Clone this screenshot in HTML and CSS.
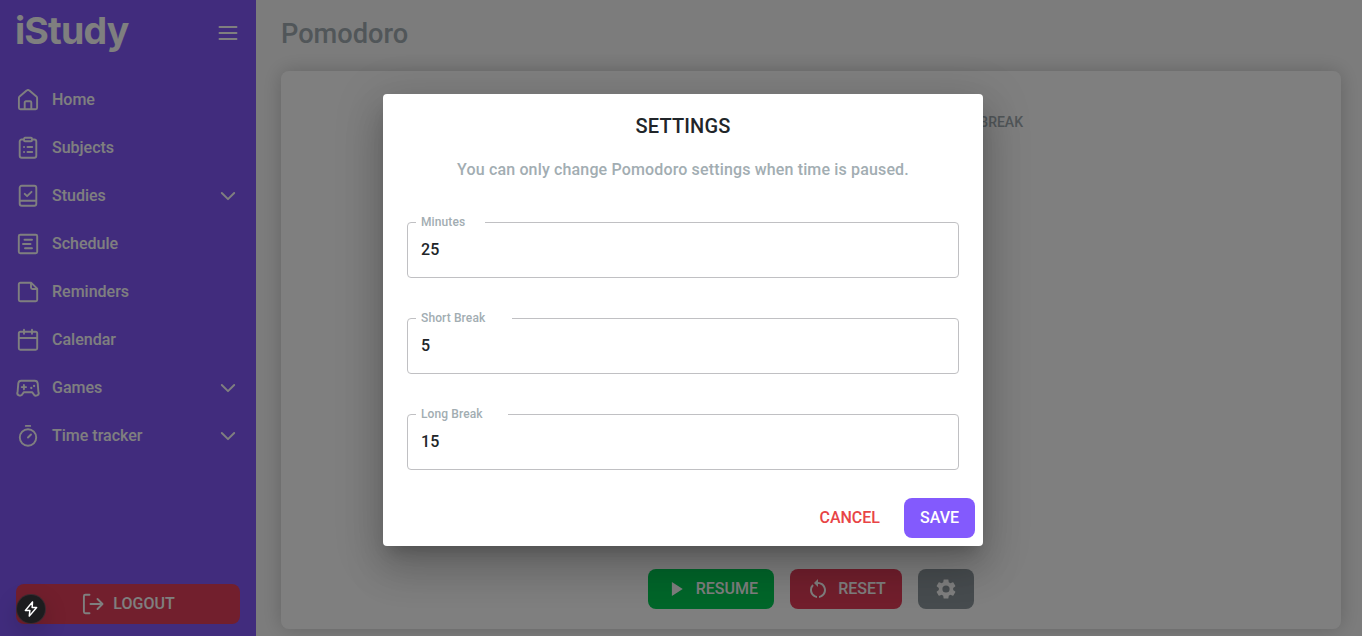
FILE: index.html
```html
<!DOCTYPE html>
<html lang="en">
<head>
<meta charset="utf-8">
<title>iStudy - Pomodoro</title>
<link rel="stylesheet" href="styles.css">
</head>
<body>
<div class="app">
  <aside class="sidebar">
    <div class="brand">
      <span class="logo">iStudy</span>
      <svg class="icon" viewBox="0 0 24 24"><path d="M3.500 6h17M3.500 12h17M3.500 18h17"/></svg>
    </div>
    <nav class="nav">
      <a class="item"><svg class="icon" viewBox="0 0 24 24"><path d="M2.900 10a2 2 0 0 1 .7-1.500l7-5.900a2.100 2.100 0 0 1 2.800 0l7 5.900a2 2 0 0 1 .7 1.500v9.700a1.500 1.500 0 0 1-1.500 1.500H4.400a1.500 1.500 0 0 1-1.500-1.500zM8.700 21v-6.500a1.200 1.200 0 0 1 1.200-1.200h4.200a1.200 1.200 0 0 1 1.200 1.200V21"/></svg><span>Home</span></a>
      <a class="item"><svg class="icon" viewBox="0 0 24 24"><path d="M8 3.500H5.700a2 2 0 0 0-2 2v14.300a2 2 0 0 0 2 2h12.600a2 2 0 0 0 2-2V5.500a2 2 0 0 0-2-2H16M9 1.800h6a1 1 0 0 1 1 1v1.400a1 1 0 0 1-1 1H9a1 1 0 0 1-1-1V2.800a1 1 0 0 1 1-1zM8 11h.1M11.500 11h4.700M8 16h.1M11.500 16h4.700"/></svg><span>Subjects</span></a>
      <a class="item"><svg class="icon" viewBox="0 0 24 24"><path d="M5.700 1.800h12.600a2 2 0 0 1 2 2v16a2 2 0 0 1-2 2H5.700a2 2 0 0 1-2-2v-16a2 2 0 0 1 2-2zM4 16.700h16M8.700 9.800l2.400 2.400 4.400-4.400"/></svg><span>Studies</span><svg class="icon chevron" viewBox="0 0 24 24"><path d="m5.800 9 6.200 6.200L18.200 9"/></svg></a>
      <a class="item"><svg class="icon" viewBox="0 0 24 24"><rect x="2.800" y="2.800" width="18.400" height="18.400" rx="1.500"/><path d="M8.500 7.700h7.500M7 12h7.500M9 16.300h7"/></svg><span>Schedule</span></a>
      <a class="item"><svg class="icon" viewBox="0 0 24 24"><path d="M4.300 2.800h11l5.900 5.900v11a1.500 1.500 0 0 1-1.500 1.500H4.300a1.500 1.500 0 0 1-1.500-1.500V4.300a1.500 1.500 0 0 1 1.500-1.500zM15 3v4.500A1.500 1.500 0 0 0 16.500 9H21"/></svg><span>Reminders</span></a>
      <a class="item"><svg class="icon" viewBox="0 0 24 24"><path d="M4.300 3.800h15.400a1.500 1.500 0 0 1 1.500 1.500v14.900a1.500 1.500 0 0 1-1.500 1.500H4.300a1.500 1.500 0 0 1-1.500-1.500V5.300a1.500 1.500 0 0 1 1.500-1.500zM3 10h18M8 1.800v3.900M16 1.800v3.900"/></svg><span>Calendar</span></a>
      <a class="item"><svg class="icon" viewBox="0 0 24 24"><path d="M5.300 4.800h13.400a3 3 0 0 1 3 2.600l.7 8.500a2.600 2.600 0 0 1-4.800 2.200l-1.500-1.900H7.900l-1.500 1.900a2.600 2.600 0 0 1-4.800-2.200l.7-8.500a3 3 0 0 1 3-2.600zM7.900 8.900v4.400M5.700 11.100h4.400"/><path class="dots" d="M15.300 12v.01M18.100 10v.01"/></svg><span>Games</span><svg class="icon chevron" viewBox="0 0 24 24"><path d="m5.800 9 6.200 6.200L18.200 9"/></svg></a>
      <a class="item"><svg class="icon" viewBox="0 0 24 24"><circle cx="12" cy="13.500" r="8.200"/><path d="M9.800 1.900h4.400M12 13.500l3-3"/></svg><span>Time tracker</span><svg class="icon chevron" viewBox="0 0 24 24"><path d="m5.800 9 6.200 6.200L18.200 9"/></svg></a>
    </nav>
    <button class="btn logout"><svg class="icon" viewBox="0 0 24 24"><path d="M8.500 2.800H4.400a1.500 1.500 0 0 0-1.500 1.500v15.400a1.500 1.500 0 0 0 1.500 1.500h4.100M9.500 12h11.500M16.500 7l5 5-5 5"/></svg>LOGOUT</button>
  </aside>
  <main class="main">
    <h1 class="title">Pomodoro</h1>
    <section class="card">
      <div class="tabs"><span>LONG BREAK</span></div>
      <div class="controls">
        <button class="btn resume"><svg class="fill" viewBox="0 0 24 24"><path d="M8 5v14l11-7z"/></svg>RESUME</button>
        <button class="btn reset"><svg class="fill" viewBox="0 0 24 24"><path d="M12 5V2L8 6l4 4V7c3.310 0 6 2.690 6 6 0 2.970-2.170 5.430-5 5.910v2.020c3.950-.49 7-3.850 7-7.930 0-4.420-3.580-8-8-8zM6 13c0-1.650.67-3.150 1.760-4.240L6.340 7.340A8 8 0 0 0 4 13c0 4.080 3.050 7.440 7 7.930v-2.020c-2.830-.48-5-2.940-5-5.910z"/></svg>RESET</button>
        <button class="btn gear"><svg class="fill" viewBox="0 0 24 24"><path d="M19.140 12.940c.04-.3.060-.61.060-.94 0-.32-.020-.640-.070-.940l2.030-1.580c.18-.14.23-.41.12-.61l-1.920-3.320c-.12-.22-.37-.29-.59-.22l-2.390.96c-.5-.38-1.030-.7-1.620-.94l-.36-2.540c-.04-.24-.24-.41-.48-.41h-3.840c-.24 0-.43.17-.47.41l-.36 2.540c-.59.24-1.130.57-1.620.94l-2.390-.96c-.22-.08-.47 0-.59.22L2.740 8.870c-.12.21-.08.47.12.61l2.030 1.580c-.05.3-.09.63-.09.94s.02.64.07.94l-2.030 1.580c-.18.14-.23.41-.12.61l1.920 3.320c.12.22.37.29.59.22l2.390-.96c.5.38 1.030.7 1.620.94l.36 2.540c.05.24.24.41.48.41h3.840c.24 0 .44-.17.47-.41l.36-2.540c.59-.24 1.130-.56 1.620-.94l2.390.96c.22.08.47 0 .59-.22l1.920-3.320c.12-.22.07-.47-.12-.61zM12 15.600A3.600 3.600 0 1 1 12 8.400a3.600 3.600 0 0 1 0 7.200z"/></svg></button>
      </div>
    </section>
  </main>
</div>
<div class="overlay">
  <div class="dialog">
    <h2 class="dialog-title">SETTINGS</h2>
    <p class="hint">You can only change Pomodoro settings when time is paused.</p>
    <div class="fields">
      <fieldset class="field"><legend class="minutes">Minutes</legend><span>25</span></fieldset>
      <fieldset class="field"><legend class="short">Short Break</legend><span>5</span></fieldset>
      <fieldset class="field"><legend class="long">Long Break</legend><span>15</span></fieldset>
    </div>
    <div class="actions">
      <button class="btn cancel">CANCEL</button>
      <button class="btn save">SAVE</button>
    </div>
  </div>
</div>
<div class="badge"><svg viewBox="0 0 24 24"><path d="M14 2.500 4.500 14h6l-.8 7.500L19.500 10h-6z"/></svg></div>
</body>
</html>
```
FILE: styles.css
```css
* { box-sizing: border-box; }
body {
  margin: 0;
  height: 636px;
  overflow: hidden;
  background: #f9f9f9;
  color: #212529;
  font: 500 16px/24px Roboto, sans-serif;
}
.app { display: flex; height: 636px; }
.sidebar {
  width: 256px;
  padding: 12px 16px;
  background: #8259fb;
  color: #fff;
  display: flex;
  flex-direction: column;
}
.brand { display: flex; justify-content: space-between; align-items: center; height: 42px; }
.logo { margin-left: -1px; padding-bottom: 4px; font: 700 37.5px/38px Inter, sans-serif; letter-spacing: -0.8px; }
.icon {
  width: 24px;
  height: 24px;
  fill: none;
  stroke: currentColor;
  stroke-width: 1.9;
  stroke-linecap: round;
  stroke-linejoin: round;
}
.dots { stroke-width: 2.3; }
.nav { margin-top: 22px; }
.item { display: flex; align-items: center; gap: 12px; height: 48px; }
.chevron { margin-left: auto; }
.btn {
  display: flex;
  align-items: center;
  justify-content: center;
  height: 40px;
  padding: 0 16px;
  border: 0;
  border-radius: 8px;
  color: #fff;
  font: 500 16px/24px Roboto, sans-serif;
}
.logout { margin-top: auto; background: #e43e5a; gap: 8px; }
.main { flex: 1; padding: 16px 21px 7px 25px; display: flex; flex-direction: column; }
.title { margin: 0 0 19px; font-size: 27.2px; line-height: 36px; font-weight: 500; color: #a2adb2; }
.card {
  flex: 1;
  display: flex;
  flex-direction: column;
  padding: 39px 20px 20px;
  border-radius: 8px;
  background: #fff;
  box-shadow: 0 0 20px rgba(0, 0, 0, .2);
}
.tabs { display: flex; justify-content: flex-end; padding-right: 298px; font-size: 14px; color: #a2adb2; }
.controls { display: flex; justify-content: center; gap: 16px; margin-top: auto; }
.fill { width: 24px; height: 24px; fill: currentColor; }
.resume { width: 126px; gap: 8px; background: #00cc55; }
.reset { width: 112px; gap: 8px; background: #e43e5a; }
.gear { background: #8e999e; }
.overlay {
  position: absolute;
  inset: 0;
  background: rgba(0, 0, 0, .5);
}
.dialog {
  width: 600px;
  height: 452px;
  margin: 94px 0 0 383px;
  padding: 16px 8px 8px;
  border-radius: 4px;
  background: #fff;
  display: flex;
  flex-direction: column;
  box-shadow: 0 11px 15px -7px rgba(0, 0, 0, .2), 0 24px 38px 3px rgba(0, 0, 0, .14), 0 9px 46px 8px rgba(0, 0, 0, .12);
}
.dialog-title { margin: 0; font-size: 20px; line-height: 32px; font-weight: 500; text-align: center; letter-spacing: .15px; }
.hint { margin: 16px 0 0; text-align: center; color: #a2adb2; line-height: 24px; letter-spacing: .15px; }
.fields { padding: 34px 16px 0; display: flex; flex-direction: column; gap: 34px; }
.field { height: 62px; margin: 0; padding: 0 8px; border: 1px solid #c0c0c3; border-radius: 4px; }
.field legend { padding: 0 5px; font-size: 12px; line-height: 12px; letter-spacing: .11px; color: #a2adb2; }
.field span { display: block; padding: 10px 5px; letter-spacing: .15px; }
.minutes { width: 69px; }
.short { width: 96px; }
.long { width: 92px; }
.actions { display: flex; justify-content: flex-end; gap: 8px; margin-top: auto; }
.cancel { background: none; color: #e84446; }
.save { background: #835afd; }
.badge {
  position: absolute;
  left: 17px;
  top: 595px;
  width: 28px;
  height: 28px;
  border-radius: 50%;
  background: #1c1c1e;
  display: flex;
  align-items: center;
  justify-content: center;
  box-shadow: 0 0 0 1px #3a2a30, 0 8px 24px rgba(0, 0, 0, .2);
}
.badge svg { width: 18px; height: 18px; fill: none; stroke: #fff; stroke-width: 2; stroke-linejoin: round; }
```
